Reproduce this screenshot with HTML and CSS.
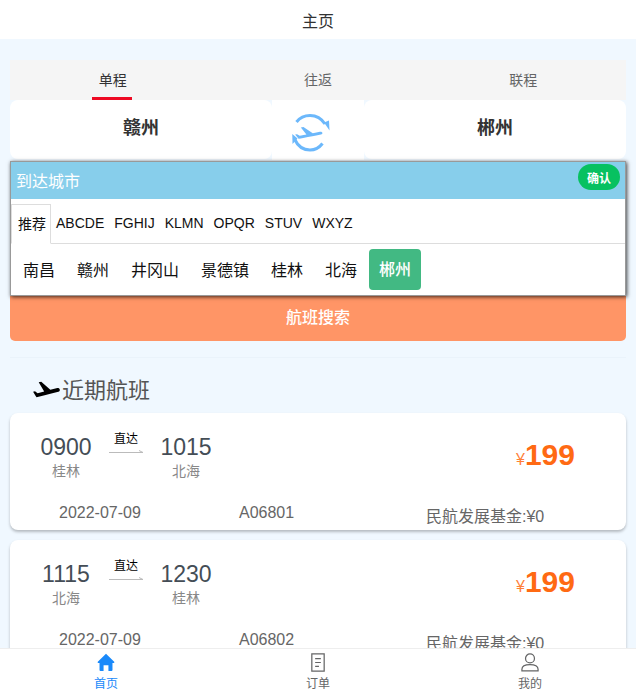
FILE: index.html
```html
<!DOCTYPE html>
<html lang="zh">
<head>
<meta charset="utf-8">
<title>主页</title>
<link rel="stylesheet" href="styles.css">
</head>
<body>
<header class="topbar">主页</header>
<main class="page">
  <section class="search">
    <div class="tabs">
      <div class="tab tab-active">单程</div>
      <div class="tab">往返</div>
      <div class="tab">联程</div>
    </div>
    <div class="route">
      <div class="city-box">赣州</div>
      <div class="swap">
        <svg class="swap-icon" viewBox="0 0 38 38" width="38" height="38">
          <path class="swap-arc" d="M4.500 8C8 3.500 13 1.500 18 1.500c6.500 0 11.500 3 15 8.500"/>
          <path class="swap-head" d="M32 8.500l5-2 .5 10z"/>
          <path class="swap-arc" d="M30.500 29.500C27 34 22.500 36 18 36 11 36 5.500 31.500 2.500 25"/>
          <path class="swap-head" d="M5.500 24.500l-5 5.500L.3 20z"/>
          <g transform="translate(1.300 9.700) scale(1.350 .95)">
            <path class="swap-head" d="M21.570 9.640c-.21-.8-1.040-1.280-1.840-1.060L14.420 10l-6.900-6.430-1.930.51 4.140 7.170-4.970 1.330-1.970-1.540-1.450.39 1.820 3.160.77 1.330 1.600-.43 5.310-1.420 4.350-1.160L20.500 11.490c.81-.23 1.280-1.050 1.070-1.850z"/>
          </g>
        </svg>
      </div>
      <div class="city-box">郴州</div>
    </div>
    <div class="popup">
      <div class="popup-head">
        <span class="popup-title">到达城市</span>
        <button class="confirm" type="button">确认</button>
      </div>
      <div class="letters">
        <span class="letter letter-active">推荐</span>
        <span class="letter">ABCDE</span>
        <span class="letter">FGHIJ</span>
        <span class="letter">KLMN</span>
        <span class="letter">OPQR</span>
        <span class="letter">STUV</span>
        <span class="letter">WXYZ</span>
      </div>
      <div class="cities">
        <span class="city">南昌</span>
        <span class="city">赣州</span>
        <span class="city">井冈山</span>
        <span class="city">景德镇</span>
        <span class="city">桂林</span>
        <span class="city">北海</span>
        <span class="city city-active">郴州</span>
      </div>
    </div>
    <button class="search-btn" type="button">航班搜索</button>
  </section>
  <hr class="divider">
  <h2 class="recent">
    <svg class="recent-icon" viewBox="1 3 22 15" width="29" height="19" preserveAspectRatio="none">
      <path d="M22.070 9.640c-.21-.8-1.040-1.280-1.840-1.060L14.920 10l-6.900-6.430-1.930.51 4.140 7.170-4.970 1.330-1.970-1.540-1.450.39 1.820 3.160.77 1.330 1.600-.43 5.310-1.420 4.350-1.160L21 11.490c.81-.23 1.280-1.050 1.070-1.850z"/>
    </svg>
    <span>近期航班</span>
  </h2>
  <article class="card">
    <div class="card-main">
      <div class="stop"><div class="time">0900</div><div class="place">桂林</div></div>
      <div class="direct">
        <div class="direct-text">直达</div>
        <svg class="direct-line" viewBox="0 0 34 5" width="34" height="5"><path d="M0 3.500h34L30 1.500"/></svg>
      </div>
      <div class="stop"><div class="time">1015</div><div class="place">北海</div></div>
      <div class="price"><span class="yen">¥</span><span class="amount">199</span></div>
    </div>
    <div class="card-foot">
      <span>2022-07-09</span>
      <span>A06801</span>
      <span class="fund">民航发展基金:¥0</span>
    </div>
  </article>
  <article class="card">
    <div class="card-main">
      <div class="stop"><div class="time">1115</div><div class="place">北海</div></div>
      <div class="direct">
        <div class="direct-text">直达</div>
        <svg class="direct-line" viewBox="0 0 34 5" width="34" height="5"><path d="M0 3.500h34L30 1.500"/></svg>
      </div>
      <div class="stop"><div class="time">1230</div><div class="place">桂林</div></div>
      <div class="price"><span class="yen">¥</span><span class="amount">199</span></div>
    </div>
    <div class="card-foot">
      <span>2022-07-09</span>
      <span>A06802</span>
      <span class="fund">民航发展基金:¥0</span>
    </div>
  </article>
</main>
<nav class="tabbar">
  <div class="bar-item bar-active">
    <svg class="bar-icon" viewBox="0 0 20 20" width="18" height="19" preserveAspectRatio="none"><path class="home-fill" d="M10 .8.9 9.200c-.5.500-.2 1.300.5 1.300h1.400v7.500c0 .6.400 1 1 1h3.500v-6h5.400v6h3.500c.6 0 1-.4 1-1v-7.500h1.400c.7 0 1-.8.500-1.300z"/></svg>
    <span>首页</span>
  </div>
  <div class="bar-item">
    <svg class="bar-icon" viewBox="0 0 20 20" width="20" height="19"><path class="line-icon" d="M3.500.8h13v18.400h-13zM7 6h6M7 10h6M7 14h4"/></svg>
    <span>订单</span>
  </div>
  <div class="bar-item">
    <svg class="bar-icon" viewBox="0 0 20 20" width="20" height="19"><path class="line-icon" d="M10 1a4.700 4.700 0 1 0 0 9.400A4.700 4.700 0 0 0 10 1zM1.500 18.700v-1.500c0-3 3-5 8.500-5s8.500 2 8.500 5v1.500z"/></svg>
    <span>我的</span>
  </div>
</nav>
</body>
</html>
```
FILE: styles.css
```css
* { box-sizing: border-box; }
html, body { margin: 0; height: 100%; }
body {
  height: 693px;
  overflow: hidden;
  background: #f0f8ff;
  color: #333;
  font-family: "Liberation Sans", "Noto Sans CJK SC", sans-serif;
}
button { font-family: inherit; border: 0; padding: 0; }

.topbar {
  height: 39px;
  background: #fff;
  color: #323233;
  font-size: 16px;
  line-height: 44px;
  text-align: center;
}
.page { padding: 21px 10px 0; }

.search { position: relative; }
.tabs {
  display: grid;
  grid-template-columns: repeat(3, 1fr);
  height: 40px;
  background: #f5f5f5;
}
.tab {
  position: relative;
  color: #646566;
  font-size: 14px;
  line-height: 40px;
  text-align: center;
}
.tab-active { color: #323233; }
.tab-active::after {
  content: "";
  position: absolute;
  left: 50%;
  bottom: 0;
  width: 40px;
  height: 3px;
  margin-left: -21px;
  background: #ee0a24;
}
.route {
  display: grid;
  grid-template-columns: 262px 92px 262px;
  height: 60px;
}
.city-box {
  height: 59px;
  border-radius: 8px;
  background: #fff;
  color: #333;
  font-size: 18px;
  font-weight: 700;
  line-height: 57px;
  text-align: center;
}
.swap {
  display: flex;
  justify-content: center;
  align-items: center;
  padding: 5px 15px 0 0;
  background: #fff;
}
.swap-arc { fill: none; stroke: #6cb8fb; stroke-width: 3; }
.swap-head { fill: #6cb8fb; }

.popup {
  position: absolute;
  top: 101px;
  left: 0;
  right: 0;
  height: 135px;
  border: 1px solid #999;
  background: #fff;
  box-shadow: 1px 1px 4px rgba(0, 0, 0, .75);
}
.popup-head {
  display: flex;
  justify-content: space-between;
  height: 37px;
  padding: 2px 5px 0 5px;
  background: #87ceeb;
  color: #fff;
}
.popup-title { font-size: 16px; line-height: 36px; }
.confirm {
  width: 42px;
  height: 26px;
  border-radius: 13px;
  background: #07c160;
  color: #fff;
  font-size: 12px;
  font-weight: 700;
}
.letters {
  display: flex;
  align-items: flex-end;
  height: 45px;
  padding-left: 5px;
  border-bottom: 1px solid #ddd;
}
.letter {
  padding: 0 5px;
  color: #111;
  font-size: 14px;
  line-height: 40px;
}
.letter-active {
  height: 40px;
  margin: 0 0 -1px -5px;
  padding: 0 4px 0 6px;
  border: 1px solid #ddd;
  border-bottom-color: #fff;
  background: #fff;
  line-height: 39px;
}
.cities {
  display: flex;
  align-items: center;
  gap: 2px;
  height: 51px;
  padding: 0 0 0 2px;
}
.city {
  height: 41px;
  padding: 0 10px;
  border-radius: 4px;
  color: #111;
  font-size: 16px;
  line-height: 43px;
}
.city-active { background: #42b983; color: #fff; font-weight: 500; line-height: 41px; }

.search-btn {
  display: block;
  width: 100%;
  height: 45px;
  margin-top: 136px;
  padding-bottom: 5px;
  border-radius: 0 0 5px 5px;
  background: #ff9566;
  color: #fff;
  font-size: 16px;
  font-weight: 500;
}
.divider {
  height: 1px;
  margin: 16px 0 0;
  border: 0;
  background: #eaf3fb;
}
.recent {
  display: flex;
  align-items: center;
  height: 55px;
  margin: 0;
  padding: 4px 0 0 22px;
  color: #555;
  font-size: 22px;
  font-weight: 400;
}
.recent-icon { margin-right: 1px; margin-top: 5px; fill: #000; }

.card {
  height: 117px;
  margin-bottom: 10px;
  border-radius: 8px;
  background: #fff;
  box-shadow: 0 2px 3px rgba(0, 0, 0, .25);
}
.card-main {
  display: flex;
  height: 89px;
  padding: 19px 51px 0 30px;
}
.stop { width: 52px; text-align: center; }
.time { color: #444d56; font-size: 23px; line-height: 30px; }
.place { margin-top: 0; color: #888; font-size: 14px; line-height: 18px; }
.direct { width: 34px; margin: -1px 17px 0; text-align: center; }
.direct-text { margin-top: 1px; color: #000; font-size: 12px; line-height: 14px; }
.direct-line { display: block; margin-top: 3px; fill: none; stroke: #bbb; stroke-width: 1; }
.price { margin-left: auto; margin-top: 6px; color: #ff6a13; line-height: 34px; }
.yen { font-size: 16px; opacity: .85; }
.amount { font-size: 30px; font-weight: 700; }
.card-foot {
  display: grid;
  grid-template-columns: 180px 187px 1fr;
  padding-left: 49px;
  color: #666;
  font-size: 16px;
  line-height: 22px;
}
.fund { margin-top: 4px; }

.tabbar {
  position: fixed;
  left: 0;
  right: 0;
  bottom: 0;
  display: grid;
  grid-template-columns: repeat(3, 1fr);
  height: 45px;
  border-top: 1px solid #eee;
  background: #fff;
}
.bar-item {
  display: flex;
  flex-direction: column;
  align-items: center;
  padding-top: 4px;
  color: #646566;
  font-size: 12px;
  line-height: 16px;
}
.bar-active { color: #1989fa; }
.bar-icon { display: block; margin-bottom: 4px; }
.home-fill { fill: #1989fa; }
.line-icon { fill: none; stroke: #646566; stroke-width: 1.300; }
```
